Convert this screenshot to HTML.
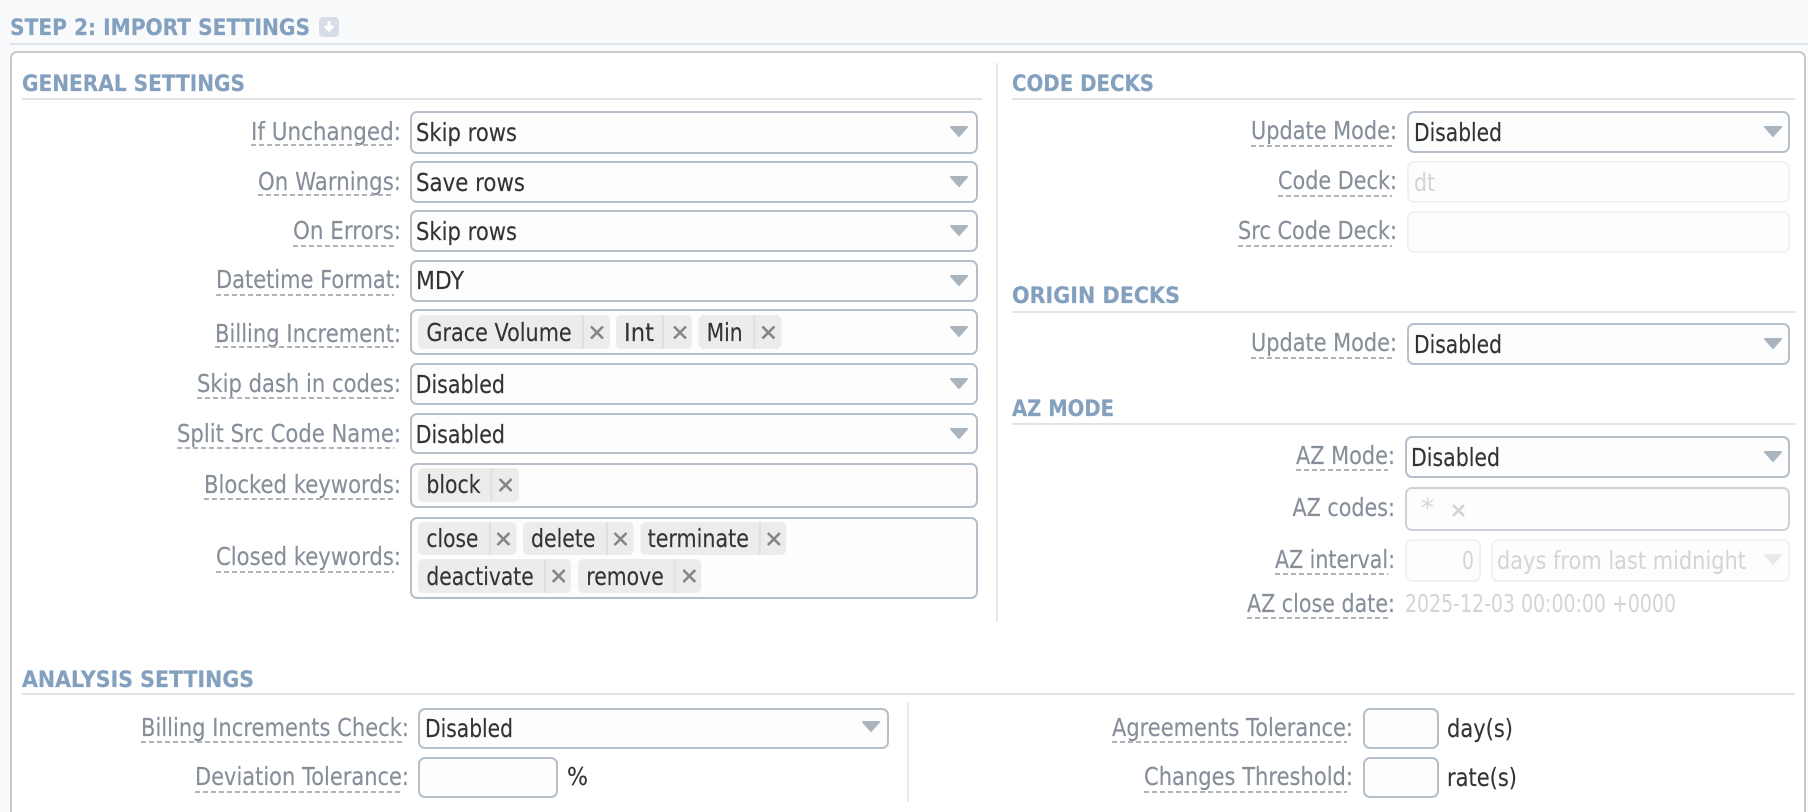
<!DOCTYPE html>
<html lang="en">
<head>
<meta charset="utf-8">
<title>Step 2: Import Settings</title>
<style>
html,body{margin:0;padding:0;background:#f9fafc;width:1808px;height:812px;overflow:hidden}
svg{display:block}
text{font-family:"DejaVu Sans","Liberation Sans",sans-serif;font-size:24.5px}
.h{font-weight:700;font-size:22.5px;fill:#84a0bf;stroke:#84a0bf;stroke-width:.2}
.l{fill:#858e99;stroke:#858e99;stroke-width:.15}
.v{fill:#333;stroke:#333;stroke-width:.15}
.d{fill:#d4d4d4}
.b{fill:#fdfdfd;stroke:#b5bfca;stroke-width:2}
.o{fill:#fdfdfd;stroke:#f1f1f1;stroke-width:2}
.z{fill:#fdfdfd;stroke:#ccd2da;stroke-width:2}
.t{fill:#ececec}
.s{stroke:#e0e0e0;stroke-width:2}
.x{stroke:#858585;stroke-width:2.6;fill:none}
.u{stroke:#b0b4ba;stroke-width:2;stroke-dasharray:5 3}
.r{stroke:#e0e3ea;stroke-width:2}
.a{fill:#aab4bf;stroke:#aab4bf;stroke-width:2;stroke-linejoin:round}
</style>
</head>
<body>
<svg xmlns="http://www.w3.org/2000/svg" width="1808" height="812" viewBox="0 0 1808 812">
<!-- page heading -->
<text class="h" x="10" y="35" textLength="300" lengthAdjust="spacingAndGlyphs">STEP 2: IMPORT SETTINGS</text>
<rect x="319" y="17" width="20" height="20" rx="4" fill="#d6dde7"/>
<path d="M329 21v8M325 26l4 4 4-4" stroke="#fff" stroke-width="3" fill="none"/>
<line class="r" x1="10" y1="44" x2="1808" y2="44"/>
<rect x="11" y="52" width="1794" height="780" rx="6" fill="#fff" stroke="#c9c9c9" stroke-width="2"/>

<!-- General settings -->
<text class="h" x="22" y="91" textLength="223" lengthAdjust="spacingAndGlyphs">GENERAL SETTINGS</text>
<line class="r" x1="22" y1="99" x2="982" y2="99"/>
<line x1="997" y1="63" x2="997" y2="622" stroke="#e3e8f2" stroke-width="2"/>

<text class="l" x="251" y="140" textLength="150" lengthAdjust="spacingAndGlyphs">If Unchanged:</text><line class="u" x1="251" y1="145" x2="394" y2="145"/>
<rect class="b" x="411" y="112" width="566" height="41" rx="6"/><text class="v" x="416" y="141" textLength="101" lengthAdjust="spacingAndGlyphs">Skip rows</text><polygon class="a" points="951,127 967,127 959,136"/>

<text class="l" x="258" y="190" textLength="143" lengthAdjust="spacingAndGlyphs">On Warnings:</text><line class="u" x1="258" y1="195" x2="394" y2="195"/>
<rect class="b" x="411" y="162" width="566" height="40" rx="6"/><text class="v" x="416" y="191" textLength="109" lengthAdjust="spacingAndGlyphs">Save rows</text><polygon class="a" points="951,177 967,177 959,186"/>

<text class="l" x="293" y="239" textLength="108" lengthAdjust="spacingAndGlyphs">On Errors:</text><line class="u" x1="293" y1="246" x2="394" y2="246"/>
<rect class="b" x="411" y="211" width="566" height="40" rx="6"/><text class="v" x="416" y="240" textLength="101" lengthAdjust="spacingAndGlyphs">Skip rows</text><polygon class="a" points="951,226 967,226 959,235"/>

<text class="l" x="216" y="288" textLength="185" lengthAdjust="spacingAndGlyphs">Datetime Format:</text><line class="u" x1="216" y1="295" x2="394" y2="295"/>
<rect class="b" x="411" y="261" width="566" height="40" rx="6"/><text class="v" x="416" y="289" textLength="48" lengthAdjust="spacingAndGlyphs">MDY</text><polygon class="a" points="951,276 967,276 959,285"/>

<text class="l" x="215" y="342" textLength="186" lengthAdjust="spacingAndGlyphs">Billing Increment:</text><line class="u" x1="215" y1="347" x2="394" y2="347"/>
<rect class="b" x="411" y="310" width="566" height="44" rx="6"/><polygon class="a" points="951,327 967,327 959,336"/>
<rect class="t" x="418" y="315" width="192" height="34" rx="5"/><line class="s" x1="583" y1="315" x2="583" y2="349"/><text class="v" x="426.4" y="341" textLength="145.3" lengthAdjust="spacingAndGlyphs">Grace Volume</text><path class="x" d="M591 326.500l12 12M603 326.500l-12 12"/>
<rect class="t" x="616" y="315" width="76" height="34" rx="5"/><line class="s" x1="663" y1="315" x2="663" y2="349"/><text class="v" x="624" y="341" textLength="30" lengthAdjust="spacingAndGlyphs">Int</text><path class="x" d="M674 326.500l12 12M686 326.500l-12 12"/>
<rect class="t" x="698.500" y="315" width="83" height="34" rx="5"/><line class="s" x1="754.300" y1="315" x2="754.300" y2="349"/><text class="v" x="706.600" y="341" textLength="36" lengthAdjust="spacingAndGlyphs">Min</text><path class="x" d="M762.400 326.500l12 12M774.400 326.500l-12 12"/>

<text class="l" x="197" y="392" textLength="204" lengthAdjust="spacingAndGlyphs">Skip dash in codes:</text><line class="u" x1="197" y1="398" x2="394" y2="398"/>
<rect class="b" x="411" y="364" width="566" height="40" rx="6"/><text class="v" x="415.600" y="393" textLength="89.400" lengthAdjust="spacingAndGlyphs">Disabled</text><polygon class="a" points="951,379 967,379 959,388"/>

<text class="l" x="177" y="442" textLength="224" lengthAdjust="spacingAndGlyphs">Split Src Code Name:</text><line class="u" x1="177" y1="448" x2="394" y2="448"/>
<rect class="b" x="411" y="414" width="566" height="39" rx="6"/><text class="v" x="415.600" y="443" textLength="89.400" lengthAdjust="spacingAndGlyphs">Disabled</text><polygon class="a" points="951,429 967,429 959,438"/>

<text class="l" x="204" y="493" textLength="197" lengthAdjust="spacingAndGlyphs">Blocked keywords:</text><line class="u" x1="204" y1="499" x2="394" y2="499"/>
<rect class="b" x="411" y="464" width="566" height="43" rx="6"/>
<rect class="t" x="418" y="468" width="101" height="34" rx="5"/><line class="s" x1="491.500" y1="468" x2="491.500" y2="502"/><text class="v" x="426.400" y="493" textLength="54.200" lengthAdjust="spacingAndGlyphs">block</text><path class="x" d="M499.600 479l12 12M511.600 479l-12 12"/>

<text class="l" x="216" y="565" textLength="185" lengthAdjust="spacingAndGlyphs">Closed keywords:</text><line class="u" x1="216" y1="572" x2="394" y2="572"/>
<rect class="b" x="411" y="518" width="566" height="80" rx="6"/>
<rect class="t" x="418" y="522" width="98.400" height="33" rx="5"/><line class="s" x1="489.800" y1="522" x2="489.800" y2="555"/><text class="v" x="426.400" y="547" textLength="52.100" lengthAdjust="spacingAndGlyphs">close</text><path class="x" d="M497.400 533l12 12M509.400 533l-12 12"/>
<rect class="t" x="523" y="522" width="110.500" height="33" rx="5"/><line class="s" x1="607" y1="522" x2="607" y2="555"/><text class="v" x="531" y="547" textLength="64.500" lengthAdjust="spacingAndGlyphs">delete</text><path class="x" d="M614.500 533l12 12M626.500 533l-12 12"/>
<rect class="t" x="640.500" y="522" width="145.800" height="33" rx="5"/><line class="s" x1="759.800" y1="522" x2="759.800" y2="555"/><text class="v" x="647.600" y="547" textLength="101.400" lengthAdjust="spacingAndGlyphs">terminate</text><path class="x" d="M767.900 533l12 12M779.900 533l-12 12"/>
<rect class="t" x="418" y="559" width="153" height="34" rx="5"/><line class="s" x1="545" y1="559" x2="545" y2="593"/><text class="v" x="426.400" y="585" textLength="107.300" lengthAdjust="spacingAndGlyphs">deactivate</text><path class="x" d="M552.700 570l12 12M564.700 570l-12 12"/>
<rect class="t" x="578.200" y="559" width="123" height="34" rx="5"/><line class="s" x1="674.700" y1="559" x2="674.700" y2="593"/><text class="v" x="586.300" y="585" textLength="77.500" lengthAdjust="spacingAndGlyphs">remove</text><path class="x" d="M683.300 570l12 12M695.300 570l-12 12"/>

<!-- Code decks -->
<text class="h" x="1012" y="91" textLength="142" lengthAdjust="spacingAndGlyphs">CODE DECKS</text>
<line class="r" x1="1012" y1="99" x2="1795" y2="99"/>
<text class="l" x="1251" y="139" textLength="146" lengthAdjust="spacingAndGlyphs">Update Mode:</text><line class="u" x1="1251" y1="146" x2="1392" y2="146"/>
<rect class="b" x="1408" y="112" width="381" height="40" rx="6"/><text class="v" x="1414" y="141" textLength="88" lengthAdjust="spacingAndGlyphs">Disabled</text><polygon class="a" points="1765,127 1781,127 1773,136"/>
<text class="l" x="1278" y="189" textLength="119" lengthAdjust="spacingAndGlyphs">Code Deck:</text><line class="u" x1="1278" y1="196" x2="1392" y2="196"/>
<rect class="o" x="1408" y="162" width="381" height="40" rx="6"/><text class="d" x="1414" y="191" textLength="21" lengthAdjust="spacingAndGlyphs">dt</text>
<text class="l" x="1238" y="239" textLength="159" lengthAdjust="spacingAndGlyphs">Src Code Deck:</text><line class="u" x1="1238" y1="246" x2="1392" y2="246"/>
<rect class="o" x="1408" y="212" width="381" height="40" rx="6"/>

<!-- Origin decks -->
<text class="h" x="1012" y="303" textLength="168" lengthAdjust="spacingAndGlyphs">ORIGIN DECKS</text>
<line class="r" x1="1012" y1="312" x2="1795" y2="312"/>
<text class="l" x="1251" y="351" textLength="146" lengthAdjust="spacingAndGlyphs">Update Mode:</text><line class="u" x1="1251" y1="358" x2="1392" y2="358"/>
<rect class="b" x="1408" y="324" width="381" height="40" rx="6"/><text class="v" x="1414" y="353" textLength="88" lengthAdjust="spacingAndGlyphs">Disabled</text><polygon class="a" points="1765,339 1781,339 1773,348"/>

<!-- AZ mode -->
<text class="h" x="1012" y="416" textLength="102" lengthAdjust="spacingAndGlyphs">AZ MODE</text>
<line class="r" x1="1012" y1="424" x2="1795" y2="424"/>
<text class="l" x="1296" y="464" textLength="99" lengthAdjust="spacingAndGlyphs">AZ Mode:</text><line class="u" x1="1296" y1="470" x2="1388" y2="470"/>
<rect class="b" x="1406" y="437" width="383" height="40" rx="6"/><text class="v" x="1411" y="466" textLength="89" lengthAdjust="spacingAndGlyphs">Disabled</text><polygon class="a" points="1765,452 1781,452 1773,461"/>
<text class="l" x="1292.500" y="516" textLength="102.500" lengthAdjust="spacingAndGlyphs">AZ codes:</text>
<rect class="z" x="1406" y="488" width="383" height="42" rx="6"/><text class="d" x="1421" y="516" textLength="13" lengthAdjust="spacingAndGlyphs">*</text><path d="M1453 505l11 11M1464 505l-11 11" stroke="#d2d2d2" stroke-width="2.600" fill="none"/>
<text class="l" x="1275" y="568" textLength="120" lengthAdjust="spacingAndGlyphs">AZ interval:</text><line class="u" x1="1275" y1="574" x2="1388" y2="574"/>
<rect class="o" x="1406" y="540" width="74" height="41" rx="6"/><text class="d" x="1462" y="569" textLength="12" lengthAdjust="spacingAndGlyphs">0</text>
<rect class="o" x="1492" y="540" width="297" height="41" rx="6"/><text class="d" x="1497" y="569" textLength="249" lengthAdjust="spacingAndGlyphs">days from last midnight</text><polygon points="1765,555 1781,555 1773,564" fill="#eaeaea" stroke="#eaeaea" stroke-width="2" stroke-linejoin="round"/>
<text class="l" x="1247" y="612" textLength="148" lengthAdjust="spacingAndGlyphs">AZ close date:</text><line class="u" x1="1247" y1="618" x2="1388" y2="618"/>
<text class="d" x="1405" y="612" textLength="271" lengthAdjust="spacingAndGlyphs">2025-12-03 00:00:00 +0000</text>

<!-- Analysis settings -->
<text class="h" x="22" y="687" textLength="232" lengthAdjust="spacingAndGlyphs">ANALYSIS SETTINGS</text>
<line class="r" x1="22" y1="694" x2="1795" y2="694"/>
<line x1="908" y1="703" x2="908" y2="802" stroke="#e3e8f2" stroke-width="2"/>
<text class="l" x="141" y="736" textLength="268" lengthAdjust="spacingAndGlyphs">Billing Increments Check:</text><line class="u" x1="141" y1="742" x2="402" y2="742"/>
<rect class="b" x="419" y="709" width="469" height="39" rx="6"/><text class="v" x="425" y="737" textLength="88" lengthAdjust="spacingAndGlyphs">Disabled</text><polygon class="a" points="863,722 879,722 871,731"/>
<text class="l" x="195" y="785" textLength="214" lengthAdjust="spacingAndGlyphs">Deviation Tolerance:</text><line class="u" x1="195" y1="792" x2="402" y2="792"/>
<rect class="b" x="419" y="758" width="138" height="39" rx="6"/><text class="v" x="567" y="785" textLength="21" lengthAdjust="spacingAndGlyphs">%</text>
<text class="l" x="1112" y="736" textLength="241" lengthAdjust="spacingAndGlyphs">Agreements Tolerance:</text><line class="u" x1="1112" y1="742" x2="1347" y2="742"/>
<rect class="b" x="1364" y="709" width="74" height="39" rx="6"/><text class="v" x="1447" y="737" textLength="66" lengthAdjust="spacingAndGlyphs">day(s)</text>
<text class="l" x="1144" y="785" textLength="209" lengthAdjust="spacingAndGlyphs">Changes Threshold:</text><line class="u" x1="1144" y1="792" x2="1347" y2="792"/>
<rect class="b" x="1364" y="758" width="74" height="39" rx="6"/><text class="v" x="1447" y="786" textLength="70" lengthAdjust="spacingAndGlyphs">rate(s)</text>
</svg>
</body>
</html>
